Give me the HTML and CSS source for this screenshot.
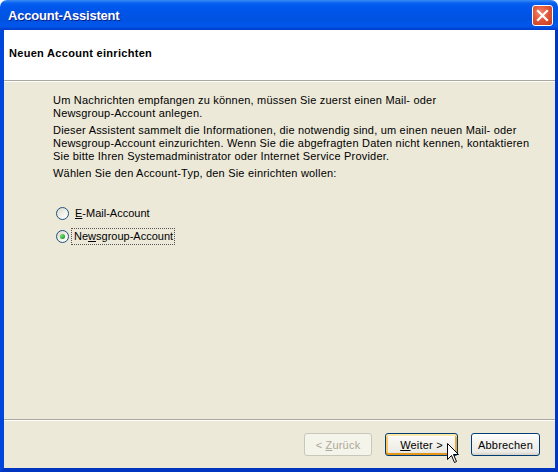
FILE: index.html
```html
<!DOCTYPE html>
<html lang="de">
<head>
<meta charset="utf-8">
<title>Account-Assistent</title>
<link rel="stylesheet" href="styles.css">
</head>
<body>
<div class="window">
  <div class="titlebar">
    <span class="title">Account-Assistent</span>
    <div class="close">
      <svg width="13" height="13" viewBox="0 0 13 13"><path d="M2 2 L11 11 M11 2 L2 11" stroke="#fff" stroke-width="2.2" stroke-linecap="square"/></svg>
    </div>
  </div>
  <div class="frame">
    <div class="header">
      <h1 class="header-title">Neuen Account einrichten</h1>
    </div>
    <div class="content">
      <p class="para">Um Nachrichten empfangen zu können, müssen Sie zuerst einen Mail- oder<br>Newsgroup-Account anlegen.</p>
      <p class="para">Dieser Assistent sammelt die Informationen, die notwendig sind, um einen neuen Mail- oder<br>Newsgroup-Account einzurichten. Wenn Sie die abgefragten Daten nicht kennen, kontaktieren<br>Sie bitte Ihren Systemadministrator oder Internet Service Provider.</p>
      <p class="para">Wählen Sie den Account-Typ, den Sie einrichten wollen:</p>
      <div class="options">
        <div class="option">
          <span class="radio"></span>
          <span class="label"><u>E</u>-Mail-Account</span>
        </div>
        <div class="option">
          <span class="radio checked"></span>
          <span class="label focused">Ne<u>w</u>sgroup-Account</span>
        </div>
      </div>
    </div>
    <div class="footer">
      <button class="btn disabled">&lt; <u>Z</u>urück</button>
      <button class="btn default"><u>W</u>eiter &gt;</button>
      <button class="btn">Abbrechen</button>
    </div>
  </div>
  <svg class="cursor" width="13" height="21" viewBox="0 0 13 21">
    <path d="M0.5 0.5 L0.5 16.5 L4.5 12.5 L7.5 19.5 L9.5 18.5 L6.5 11.5 L11.5 11.5 Z" fill="#fff" stroke="#000" stroke-width="1"/>
  </svg>
</div>
</body>
</html>
```
FILE: styles.css
```css
html, body {
  margin: 0;
  padding: 0;
  background: #ffffff;
}

.window {
  position: relative;
  width: 558px;
  height: 472px;
  display: flex;
  flex-direction: column;
  font-family: "Liberation Sans", Arial, sans-serif;
  font-size: 11px;
  color: #000;
}

.titlebar {
  height: 30px;
  flex: none;
  box-sizing: border-box;
  display: flex;
  align-items: center;
  justify-content: space-between;
  padding: 0 5px 0 8px;
  border-radius: 7px 7px 0 0;
  background: linear-gradient(to bottom,
    #3a8cf5 0px, #0a62f0 3px, #0058ee 6px, #0055e8 12px,
    #0052e0 20px, #0057ec 25px, #0054e4 27px, #003fd0 29px, #003fd0 30px);
}

.title {
  color: #fff;
  font-weight: bold;
  font-size: 13px;
  letter-spacing: -0.2px;
  text-shadow: 1px 1px 0 #0a1e8a;
  margin-top: 1px;
}

.close {
  width: 21px;
  height: 21px;
  box-sizing: border-box;
  border: 1px solid #fff;
  border-radius: 3px;
  background: radial-gradient(circle at 40% 35%, #f08a6a 0%, #e2573a 45%, #c8391a 100%);
  display: flex;
  align-items: center;
  justify-content: center;
}

.frame {
  flex: 1;
  display: flex;
  flex-direction: column;
  background: #ece9d8;
  border-left: 4px solid #0046dc;
  border-right: 3px solid #0036c8;
  border-bottom: 4px solid #0035c2;
  min-height: 0;
}

.header {
  height: 50px;
  flex: none;
  background: #fff;
  border-bottom: 1px solid #aca899;
  box-shadow: 0 1px 0 #fff;
  display: flex;
  align-items: center;
  padding-left: 5px;
}

.header-title {
  margin: 0;
  font-size: 11px;
  font-weight: bold;
  letter-spacing: 0.3px;
  margin-top: -4px;
}

.content {
  flex: 1;
  padding: 13px 0 0 49px;
  border-bottom: 1px solid #aca899;
  box-shadow: 0 1px 0 #fff;
  letter-spacing: 0.2px;
}

.para {
  margin: 0 0 4px 0;
  line-height: 13px;
  white-space: nowrap;
}

.options {
  display: flex;
  flex-direction: column;
  gap: 10px;
  margin-top: 27px;
  margin-left: 3px;
  letter-spacing: 0;
}

.option {
  display: flex;
  align-items: center;
  height: 13px;
}

.radio {
  width: 13px;
  height: 13px;
  box-sizing: border-box;
  border-radius: 50%;
  border: 1px solid #1c5180;
  background: linear-gradient(135deg, #dcd9c6 0%, #f4f3ee 60%, #ffffff 100%);
  display: flex;
  align-items: center;
  justify-content: center;
  flex: none;
}

.radio.checked::after {
  content: "";
  width: 5px;
  height: 5px;
  border-radius: 50%;
  background: radial-gradient(circle at 35% 35%, #7fe07f, #21a121 70%);
}

.label {
  margin-left: 4px;
  line-height: 13px;
  padding: 1px 1px;
  border: 1px dotted transparent;
}

.label.focused {
  border-color: #555;
  margin-left: 2px;
  padding: 1px 1px 1px 2px;
}

.footer {
  height: 48px;
  flex: none;
  display: flex;
  justify-content: flex-end;
  align-items: flex-start;
  padding: 13px 15px 0 0;
  box-sizing: border-box;
  gap: 13px;
}

.btn {
  height: 23px;
  min-width: 68px;
  padding: 0 6px;
  font-family: "Liberation Sans", Arial, sans-serif;
  font-size: 11px;
  letter-spacing: 0.2px;
  color: #000;
  border: 1px solid #003c74;
  border-radius: 3px;
  background: linear-gradient(to bottom, #ffffff 0%, #f4f3ee 40%, #ecebe6 85%, #d6d0c5 100%);
}

.btn.default {
  min-width: 73px;
  box-shadow: inset 0 2px 0 #ffe9a8, inset 0 -2px 0 #e5971a, inset 2px 0 0 #fbc761, inset -2px 0 0 #f0a830;
}

.btn.disabled {
  color: #aca899;
  border-color: #c9c7ba;
  background: #f5f4ea;
}

.cursor {
  position: absolute;
  left: 447px;
  top: 443px;
}
```
